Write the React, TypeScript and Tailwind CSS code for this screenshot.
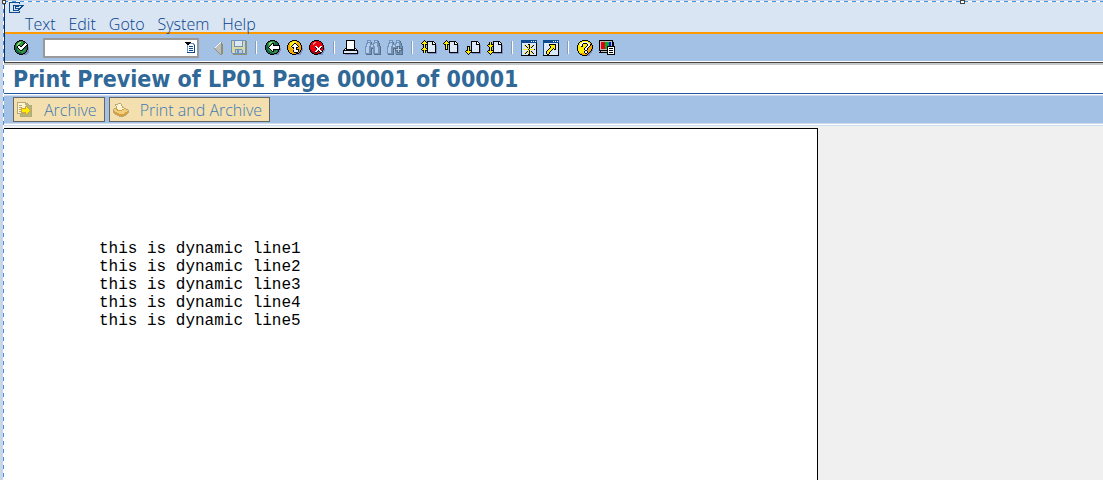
import React, { useState } from 'react';

interface Layer {
  rows: string[];
  x?: number;
  y?: number;
}

const palette: { [key: string]: string } = {
  k: '#000000',
  w: '#ffffff',
  g: '#2f9a3c',
  G: '#9bd873',
  t: '#17604d',
  y: '#ffee00',
  o: '#f0a800',
  r: '#e80010',
  R: '#a00010',
  p: '#ff8a80',
  s: '#7f8fc4',
  b: '#dbe8f8',
  n: '#0c4a92',
  N: '#6f93bd',
  l: '#b5cbe6',
  d: '#5c6f88',
  e: '#d9d9a0',
  E: '#8d8f76',
  a: '#bdbdbd',
  u: '#0010e8',
  v: '#00b020',
  c: '#f0d080',
  f: '#b8a878',
  F: '#d9a040',
  h: '#aeb77c',
  i: '#fff4d0',
};

const okIcon = [
  '.....kkkk.......',
  '...kktgggkk.....',
  '..ktgGGggttk....',
  '.ktgGGgggtkwk...',
  '.kgGGgggtkwwwk..',
  'ktgGkkggkwwwkk..',
  'ktgkwwkkwwwktk..',
  'kttkwwwwwwkttks.',
  'kttgkwwwwktttks.',
  'kttggkwwktggtks.',
  '.kttggkktgggkss.',
  '.ktttggggggtkss.',
  '..kttttgggtksss.',
  '...kkttttkksss..',
  '.....kkkkssss...',
];

const backIcon = [
  '.....kkkkk......',
  '...kktgggtkk....',
  '..ktgGGgggttk...',
  '.ktgGGgkkgtttk..',
  '.ktgGgkwkttttk..',
  'kttggkwwkkkkkkk.',
  'kttgkwwwwwwwwwk.',
  'kttkwwwwwwwwwwk.',
  'ktttkwwwwwwwwwks',
  'kttggkwwkkkkkkks',
  '.kttggkwkttgtkss',
  '.ktttggkkgggtks.',
  '..kttttggggtkss.',
  '...kkttttkkkss..',
  '.....kkkksssss..',
];

const exitIcon = [
  '.....kkkkk......',
  '...kkoyyyokk....',
  '..koyyiyyyook...',
  '.koyyiykkyoook..',
  '.koyyykwwkoook..',
  'kooyykwwwwkoook.',
  'kooykwwwwwwkook.',
  'koooykkwwkkoook.',
  'kooooykwwkooooks',
  'koooooowwkkkooks',
  '.kooookwwwwkokss',
  '.kooookwwwwkoks.',
  '..kooookkkkokss.',
  '...kkooookkkss..',
  '.....kkkksssss..',
];

const cancelIcon = [
  '.....kkkkk......',
  '...kkrrrrrkk....',
  '..krrpprrrrrk...',
  '.krrpprrrrrrrk..',
  '.krrprrrrrrrrk..',
  'krrrrrrrrrrrrrk.',
  'krrrrrwwrrrwwrk.',
  'krrrrrkwwrwwkrk.',
  'krrrrrrkwwwkrrks',
  'kRrrrrrrwwwrrrks',
  '.kRrrrrwwkwwrkss',
  '.kRRrrwwkrkwwks.',
  '..kRRRkkrrrkkss.',
  '...kkRRRRkkkss..',
  '.....kkkksssss..',
];

const triangleIcon = [
  '................',
  '................',
  '...........wE...',
  '..........waE...',
  '.........waaEE..',
  '........waaaEE..',
  '.......waaaaEE..',
  '......waaaaaEE..',
  '.....EaaaaaaEE..',
  '......EaaaaaEE..',
  '.......EaaaaEE..',
  '........EaaaEE..',
  '.........EaaEE..',
  '..........EaEE..',
  '...........EE...',
];

const saveIcon = [
  'NNNNNNNNNNNNNNN.',
  'NeeNbbbbbbbNeeNE',
  'NeeNbbbbbbbNeeNE',
  'NeeNbbbbbbbNeeNE',
  'NeeNbbbbbbbNeeNE',
  'NeeNbbbbbbbNeeNE',
  'NeeNNNNNNNNNeeNE',
  'NeeeeeeeeeeeeeNE',
  'NeeeeeeeeeeeeeNE',
  'NeeeNNNNNNNeeeNE',
  'NeeeNlNNlllNeeNE',
  'NeeeNlNNlllNeeNE',
  'NeeeNlNNlllNeeNE',
  '.NNNNNNNNNNNNNNE',
  '..EEEEEEEEEEEEEE',
];

const printerIcon = [
  '...kkkkkkkkk....',
  '...kwwwwwwwk....',
  '...kwwwwwwwk....',
  '...kwwwwwwwk....',
  '...kwwwwwwwk....',
  '...kwwwwwwwk....',
  '...kwwwwwwwk....',
  '...kwwwwwwwk....',
  '..kkwwwwwwwkk...',
  '.kwkkkkkkkkkwk..',
  'kkkkkkkkkkkkkkk.',
  'kbbbbbbbbbbbbbks',
  'kbbbbbbbbbbbbbks',
  'kkkkkkkkkkkkkkks',
  '..sssssssssssss.',
];

const findIcon = [
  '..NNNN...NNNN...',
  '..NllN...NllNd..',
  '..NNNNd..NNNNd..',
  '.NNllNd.NNllNNd.',
  '.NlllNNNNlllNNd.',
  '.NlllNllNlllNNd.',
  'NNllNNllNNllNNNd',
  'NlllNNNNNNlllNNd',
  'NlllNNddNNlllNNd',
  'NlllNNd.NNlllNNd',
  'NlllNNd.NNlllNNd',
  'NlllNNd.NNlllNNd',
  'NlllNNd.NNlllNNd',
  'NNNNNNd.NNNNNNNd',
  '.dddddd..ddddddd',
];

const plusMark = [
  '..ddd...',
  '..dld...',
  'dddldddd',
  'dllllldd',
  'dddldddd',
  '..dld...',
  '..ddd...',
];

const sheet = [
  '......kkkkkkk...',
  '......kbbbbkwk..',
  '......kbbbbkwwk.',
  '......kbbbbkkkk.',
  '......kbbbbbbbks',
  '......kbbbbbbbks',
  '......kbbbbbbbks',
  '......kbbbbbbbks',
  '......kbbbbbbbks',
  '......kbbbbbbbks',
  '......kbbbbbbbks',
  '......kkkkkkkkks',
  '.......sssssssss',
];

const arrowUp = [
  '...k...',
  '..kyk..',
  '.kyyyk.',
  'kyyyyyk',
  '.kkykk.',
  '..kyk..',
  '..kyk..',
];

const arrowDown = [...arrowUp].reverse();

const windowFrame = [
  'nnnnnnnnnnnnnnnn',
  'nnnnnnnnnnwnwnwn',
  'nnnnnnnnnnnnnnnn',
  'nbbbbbbbbbbbbbbk',
  'nbbbbbbbbbbbbbbk',
  'nbbbbbbbbbbbbbbk',
  'nbbbbbbbbbbbbbbk',
  'nbbbbbbbbbbbbbbk',
  'nbbbbbbbbbbbbbbk',
  'nbbbbbbbbbbbbbbk',
  'nbbbbbbbbbbbbbbk',
  'nbbbbbbbbbbbbbbk',
  'nbbbbbbbbbbbbbbk',
  'nbbbbbbbbbbbbbbk',
  'nbbbbbbbbbbbbbbk',
  'kkkkkkkkkkkkkkkk',
];

const spark = [
  '.....kk.....',
  '.yk..yk..yk.',
  '..yk.yk.yk..',
  '...ykykyk...',
  '.....yk.....',
  'yyyyykyyyyyk',
  '.....yk.....',
  '...ykykyk...',
  '..yk.yk.yk..',
  '.yk..yk..yk.',
  '.....kk.....',
];

const shortcutArrow = [
  '...kkkkkkk.',
  '...kyyyyyk.',
  '....kyyyyk.',
  '....kyyyyk.',
  '...kyyykyk.',
  '..kyyyk.kk.',
  '.kyyyk.....',
  'kyyyk......',
  'kyyk.......',
  'kyyk.......',
  '.kk........',
];

const helpIcon = [
  '.....kkkkkk.....',
  '...kkyyyyyykk...',
  '..kyywwwwwwyyk..',
  '.kyywwkkkkwwyok.',
  '.kywwkyyyykwwkk.',
  'kyywwkyyyykwwkok',
  'kyyykkyyykwwkook',
  'kyyyyyyykwwkoook',
  'kyyyyyykwwkooook',
  'kyyyyyykwwkoooks',
  'kyyyyyyykkooooks',
  '.kyyyyykwwkooks.',
  '.kyyyyykwwkokss.',
  '..kooooykkokss..',
  '...kkoooookss...',
  '.....kkkkksss...',
];

const monitorIcon = [
  'kkkkkkkkkkkkkk..',
  'kaaaaaaaaaaaak..',
  'karrrrvvvvuuakk.',
  'karrrrvvvvuuakk.',
  'karrrrvvvvuuakk.',
  'karrrrvvvvuuakk.',
  'karrrrvvkkkkkkkk',
  'karrrrvvkwwwwwwk',
  'karrrrvvkwkkkkwk',
  'kaaaaaaakwwwwwwk',
  'kkkkkkkkkwkkkkwk',
  '.kaaaaaakwwwwwwk',
  'kkkkkkkkkwkkkkwk',
  '........kwwwwwwk',
  '........kkkkkkkk',
];

const historyIcon = [
  'kkkkkk....',
  '.kkkkNNNN.',
  '..kkwwwwNN',
  '..Nwwwwwwn',
  '..Nwnnnnwn',
  '..Nwwwwwwn',
  '..Nwnnnnwn',
  '..Nwwwwwwn',
  '..Nwnnnnwn',
  '..Nwwwwwwn',
  '..nnnnnnnn',
];

const sessionIcon = [
  'nnnnnnnnnnn....',
  'n.........n....',
  'n..............',
  'n...nnnnnnnnnnn',
  'n...n.nnnn..nn.',
  'n...n.n....nn..',
  'n...n.nnnnnn...',
  'n...n....nn....',
  'n...nnnnnn.....',
  'n.........n....',
  'nnnnnnnnnnn....',
];

const archiveIcon = [
  'fffffffff.......',
  'fiiiiiiifff.....',
  'fiiiiiiifhhf....',
  'fifffiiiihhhhff.',
  'fiiiiiiiFFhhhhf.',
  'fifffiiiFyFhhhf.',
  'fiiiFFFFFyyFhhf.',
  'fiffFyyyyyyyFhf.',
  'fiiiFyyyyyyyyFf.',
  'fiffFyyyyyyyFhf.',
  'fiiiFFFFFyyFhhf.',
  'fffffffhFyFhhhf.',
  '...fhhhhFFhhhhf.',
  '...fhhhhhhhhhhf.',
  '...ffffffffffff.',
];

const printArchiveIcon = [
  '.....fff........',
  '..fffiiif.......',
  '..fiiiiif.......',
  '...fiiiiif......',
  '...fiiiiiff.....',
  '.ffFiiiiiiiFf...',
  'fccFFiiiiFFccff.',
  'fcccFFFFFccccccf',
  'fFccccccccccccFf',
  'fFFFccccccccFFFf',
  '.fFFFFcccccFFFf.',
  '..ffFFFFFFFFFf..',
  '....ffFFFFFff...',
  '......fffff.....',
];

// Draws stacked pixel maps, one rect per run of equal pixels
function PixelIcon({ layers, width = 16, height = 16 }: { layers: Layer[]; width?: number; height?: number }) {
  return (
    <svg
      width={width}
      height={height}
      viewBox={`0 0 ${width} ${height}`}
      shapeRendering="crispEdges"
      aria-hidden="true"
      className="block shrink-0"
    >
      {layers.map((layer, l) =>
        layer.rows.map((row, r) =>
          [...row.matchAll(/([a-zA-Z])\1*/g)].map((run) => (
            <rect
              key={`${l}-${r}-${run.index}`}
              x={(layer.x ?? 0) + (run.index ?? 0)}
              y={(layer.y ?? 0) + r}
              width={run[0].length}
              height={1}
              fill={palette[run[1]]}
            />
          ))
        )
      )}
    </svg>
  );
}

interface Tool {
  label: string;
  layers: Layer[];
  disabled?: boolean;
}

const toolGroups: Tool[][] = [
  [
    { label: 'Collapse', layers: [{ rows: triangleIcon }] },
    { label: 'Save', layers: [{ rows: saveIcon }], disabled: true },
  ],
  [
    { label: 'Back', layers: [{ rows: backIcon }] },
    { label: 'Exit', layers: [{ rows: exitIcon }] },
    { label: 'Cancel', layers: [{ rows: cancelIcon }] },
  ],
  [
    { label: 'Print', layers: [{ rows: printerIcon }] },
    { label: 'Find', layers: [{ rows: findIcon }], disabled: true },
    { label: 'Find next', layers: [{ rows: findIcon }, { rows: plusMark, x: 8, y: 6 }], disabled: true },
  ],
  [
    { label: 'First page', layers: [{ rows: sheet, y: 1 }, { rows: arrowUp, y: 6 }, { rows: arrowUp }] },
    { label: 'Previous page', layers: [{ rows: sheet, y: 1 }, { rows: arrowUp }, { rows: ['kyk', 'kyk', 'kkk'], x: 2, y: 7 }] },
    { label: 'Next page', layers: [{ rows: sheet, y: 1 }, { rows: ['kkk', 'kyk'], x: 2, y: 6 }, { rows: arrowDown, y: 8 }] },
    { label: 'Last page', layers: [{ rows: sheet, y: 1 }, { rows: arrowDown, y: 2 }, { rows: arrowDown, y: 8 }] },
  ],
  [
    { label: 'New session', layers: [{ rows: windowFrame }, { rows: spark, x: 2, y: 4 }] },
    { label: 'Create shortcut', layers: [{ rows: windowFrame }, { rows: shortcutArrow, x: 3, y: 4 }] },
  ],
  [
    { label: 'Help', layers: [{ rows: helpIcon }] },
    { label: 'Customize layout', layers: [{ rows: monitorIcon }] },
  ],
];

const menus = ['Text', 'Edit', 'Goto', 'System', 'Help'];

const lines = [1, 2, 3, 4, 5].map((n) => `this is dynamic line${n}`);

function Separator() {
  return <span className="mx-2 h-[13px] w-[2px] shrink-0 border-l border-[#8c9cb4] bg-white" />;
}

function App() {
  const [command, setCommand] = useState<string>('');

  return (
    <div className="relative flex min-h-screen bg-[#cbd5e8] pt-px font-['Open_Sans',sans-serif]">
      <span className="absolute left-[2px] top-0 z-10 h-[4px] w-[4px] border border-[#444] bg-white" />
      <span className="absolute left-[87%] top-0 z-10 h-[4px] w-[5px] border border-[#444] bg-white" />
      <div className="ml-[3px] w-px shrink-0 bg-[repeating-linear-gradient(to_bottom,#3f93e4_0_4px,#ffffff_4px_8px)]" />

      <div className="flex min-w-0 flex-1 flex-col bg-[#f0f0f0]">
        <div className="h-px bg-[repeating-linear-gradient(to_right,#3f93e4_0_4px,#ffffff_4px_8px)]" />

        <header className="border-l border-[#0b2c5c]">
          <div className="bg-[#d9e5f3] pl-1">
            <PixelIcon layers={[{ rows: sessionIcon }]} width={15} height={12} />
            <nav className="flex h-[18px] items-end gap-[13px] pl-4">
              {menus.map((menu) => (
                <button key={menu} type="button" className="h-[18px] pt-px text-[16px] font-light leading-[18px] text-[#063f8a]">
                  {menu}
                </button>
              ))}
            </nav>
          </div>

          <div className="flex h-[30px] items-center border-b border-t-2 border-b-white border-t-[#ff9900] bg-[#a3c0e5] pl-[9px]">
            <button type="button" aria-label="Enter" className="mr-[13px]">
              <PixelIcon layers={[{ rows: okIcon }]} />
            </button>
            <div className="mr-[10px] flex h-[20px] w-[156px] shrink-0 items-center border-2 border-[#999] bg-white pr-[2px]">
              <input
                type="text"
                aria-label="Command"
                value={command}
                onChange={(e) => setCommand(e.target.value)}
                className="min-w-0 flex-1 px-1 text-[14px] leading-4 outline-none"
              />
              <button type="button" aria-label="Command history">
                <PixelIcon layers={[{ rows: historyIcon }]} width={10} height={11} />
              </button>
            </div>
            {toolGroups.map((group, i) => (
              <React.Fragment key={i}>
                {i > 0 && <Separator />}
                <div className="flex gap-[6px]">
                  {group.map((tool) => (
                    <button key={tool.label} type="button" aria-label={tool.label} disabled={tool.disabled}>
                      <PixelIcon layers={tool.layers} />
                    </button>
                  ))}
                </div>
              </React.Fragment>
            ))}
          </div>
        </header>

        <div className="border-b border-t border-b-[#1f5a9a] border-t-[#444] bg-white">
          <div className="h-[2px] bg-[#c8c8c8]" />
          <h1 className="h-[28px] pl-[9px] font-['DejaVu_Sans_Condensed','DejaVu_Sans',sans-serif] text-[23px] font-bold leading-[28px] text-[#306898]">
            Print Preview of LP01 Page 00001 of 00001
          </h1>
        </div>

        <div className="border-t border-white">
          <div className="flex gap-1 border-b border-t border-[#cfdcec] bg-[#a3c0e5] py-px pl-[9px]">
            <button
              type="button"
              className="flex h-[25px] items-center gap-[11px] border border-[#666] bg-[#f3e0ae] pl-[3px] pr-[7px] text-[16px] font-light text-[#3f78b4]"
            >
              <PixelIcon layers={[{ rows: archiveIcon }]} />
              Archive
            </button>
            <button
              type="button"
              className="flex h-[25px] items-center gap-[11px] border border-[#666] bg-[#f3e0ae] pl-[3px] pr-[7px] text-[16px] font-light text-[#3f78b4]"
            >
              <PixelIcon layers={[{ rows: printArchiveIcon, y: 1 }]} />
              Print and Archive
            </button>
          </div>
          <div className="h-[2px] border-b border-t border-b-[#cfdcec] border-t-white" />
        </div>

        <main className="flex flex-1 flex-col pt-[2px]">
          <div className="w-full max-w-[814px] flex-1 border-r border-t border-black bg-white pl-[95px] pt-[111px]">
            {lines.map((line) => (
              <p key={line} className="font-['Liberation_Mono',monospace] text-[16px] leading-[18px] text-black">
                {line}
              </p>
            ))}
          </div>
        </main>
      </div>
    </div>
  );
}

export default App;
